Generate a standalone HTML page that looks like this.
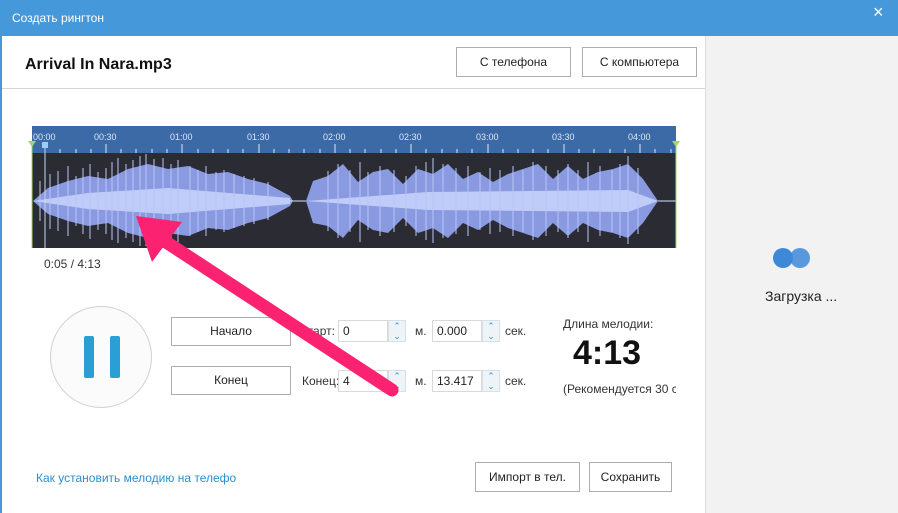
<!DOCTYPE html>
<html><head><meta charset="utf-8"><style>
*{margin:0;padding:0;box-sizing:border-box}
body{width:898px;height:513px;overflow:hidden;background:#fff;font-family:"Liberation Sans","DejaVu Sans",sans-serif;position:relative;color:#222}
.a{position:absolute}
.btn{position:absolute;border:1px solid #adadad;background:#fff;font-size:12px;text-align:center;color:#222}
.inp{position:absolute;border:1px solid #d9d9d9;height:22px;font-size:12px;padding:3px 4px;background:#fff}
.sp{position:absolute;width:18px;height:22px;background:#eef3f8;border:1px solid #d6e0ea;font-size:9px;color:#3a8fd0;text-align:center;line-height:10px}
.lbl{position:absolute;font-size:12px;color:#333}
</style></head><body>
<div class="a" style="left:0;top:0;width:898px;height:36px;background:#4598da"></div>
<div class="a" style="left:12px;top:11px;color:#fff;font-size:12px">Создать рингтон</div>
<div class="a" style="left:873px;top:2px;color:#fff;font-size:18px">×</div>
<div class="a" style="left:0;top:36px;width:2px;height:477px;background:#4598da"></div>
<div class="a" style="left:705px;top:36px;width:193px;height:477px;background:#f2f2f2;border-left:1px solid #ddd"></div>
<div class="a" style="left:25px;top:56px;font-size:16px;font-weight:bold;color:#111">Arrival In Nara.mp3</div>
<div class="btn" style="left:456px;top:47px;width:115px;height:30px;line-height:28px">С телефона</div>
<div class="btn" style="left:582px;top:47px;width:115px;height:30px;line-height:28px">С компьютера</div>
<div class="a" style="left:2px;top:88px;width:703px;height:1px;background:#d6d6d6"></div>
<svg class="a" style="left:28px;top:126px" width="652" height="122">
<rect x="4" y="0" width="644" height="27" fill="#3b6aa6"/>
<rect x="4" y="27" width="644" height="95" fill="#2b2c33"/>
<g fill="#dde6f4" font-size="9" font-family="Liberation Sans">
<text x="5" y="14">00:00</text><text x="66" y="14">00:30</text><text x="142" y="14">01:00</text><text x="219" y="14">01:30</text><text x="295" y="14">02:00</text><text x="371" y="14">02:30</text><text x="448" y="14">03:00</text><text x="524" y="14">03:30</text><text x="600" y="14">04:00</text>
</g>
<path stroke="#dde6f4" stroke-width="1" d="M17 21v6M32 23v4M48 23v4M63 23v4M78 18v9M93 23v4M108 23v4M124 23v4M139 23v4M154 18v9M170 23v4M185 23v4M200 23v4M215 23v4M231 18v9M246 23v4M261 23v4M276 23v4M292 23v4M307 18v9M322 23v4M337 23v4M353 23v4M368 23v4M383 18v9M398 23v4M414 23v4M429 23v4M444 23v4M460 18v9M475 23v4M490 23v4M505 23v4M520 23v4M536 18v9M551 23v4M566 23v4M582 23v4M597 23v4M612 18v9M627 23v4M643 23v4"/>
<polygon fill="#8a9ae0" points="5,75 20,62 40,55 60,50 80,53 100,43 120,38 140,43 160,40 180,48 200,46 220,53 240,58 262,70 265,75 262,80 240,92 220,97 200,104 180,102 160,110 140,107 120,112 100,107 80,97 60,100 40,95 20,88"/>
<polygon fill="#8a9ae0" points="278,75 285,55 300,50 315,38 330,56 345,46 360,43 375,58 390,43 405,48 420,38 435,53 450,46 465,56 480,48 495,43 510,38 525,53 540,40 555,53 570,46 585,43 600,38 615,53 630,75 615,97 600,112 585,107 570,104 555,97 540,110 525,97 510,112 495,107 480,102 465,94 450,104 435,97 420,112 405,102 390,107 375,92 360,107 345,104 330,94 315,112 300,100 285,97"/>
<polygon fill="#c0ccf8" points="5,75 60,67 140,62 262,72 262,78 140,88 60,83"/>
<polygon fill="#c0ccf8" points="278,75 400,66 600,64 630,75 600,86 400,84"/>
<path stroke="#d8e0ff" stroke-width="1" d="M262 75h16M630 75h18"/>
<path stroke="#b8c4fa" stroke-width="1" d="M12 55v40M22 48v55M30 45v60M40 40v70M48 50v50M55 42v66M62 38v75M70 46v58M78 42v66M84 36v78M90 32v85M98 38v74M105 34v82M112 30v90M118 28v92M126 33v84M135 32v86M143 38v74M150 34v82M162 40v70M170 44v62M178 40v70M188 46v58M196 44v62M206 48v54M216 50v50M226 52v46M240 56v38M300 45v60M310 38v74M322 44v62M332 36v80M340 46v58M352 40v70M366 44v62M378 50v50M388 40v70M398 36v78M405 32v85M415 38v74M428 42v66M440 40v70M452 46v58M462 42v66M472 44v62M485 40v70M495 44v62M505 36v78M518 40v70M530 44v62M540 38v74M550 44v62M560 36v80M572 40v70M584 44v62M592 38v74M600 30v88M610 42v66"/>
<line x1="17" y1="20" x2="17" y2="122" stroke="#c8d6f0" stroke-width="1"/>
<rect x="14" y="16" width="6" height="6" fill="#9ad0f5"/>
<line x1="4" y1="18" x2="4" y2="122" stroke="#9ed86a"/>
<line x1="648" y1="18" x2="648" y2="122" stroke="#9ed86a"/>
<polygon points="0,15 8,15 4,21" fill="#9ed86a"/><polygon points="644,15 652,15 648,21" fill="#9ed86a"/>
</svg>
<div class="lbl" style="left:44px;top:257px">0:05 / 4:13</div>
<div class="a" style="left:50px;top:306px;width:102px;height:102px;border-radius:50%;border:1px solid #d0d0d0;background:#fbfbfb"></div>
<div class="a" style="left:84px;top:336px;width:10px;height:42px;background:#2a9fd6;border-radius:2px"></div>
<div class="a" style="left:110px;top:336px;width:10px;height:42px;background:#2a9fd6;border-radius:2px"></div>
<div class="btn" style="left:171px;top:317px;width:120px;height:29px;line-height:27px">Начало</div>
<div class="btn" style="left:171px;top:366px;width:120px;height:29px;line-height:27px">Конец</div>
<div class="lbl" style="left:299px;top:324px">Старт:</div>
<div class="lbl" style="left:302px;top:374px">Конец:</div>
<div class="inp" style="left:338px;top:320px;width:50px">0</div><div class="sp" style="left:388px;top:320px">⌃<br>⌄</div>
<div class="inp" style="left:338px;top:370px;width:50px">4</div><div class="sp" style="left:388px;top:370px">⌃<br>⌄</div>
<div class="lbl" style="left:415px;top:324px">м.</div><div class="lbl" style="left:415px;top:374px">м.</div>
<div class="inp" style="left:432px;top:320px;width:50px">0.000</div><div class="sp" style="left:482px;top:320px">⌃<br>⌄</div>
<div class="inp" style="left:432px;top:370px;width:50px">13.417</div><div class="sp" style="left:482px;top:370px">⌃<br>⌄</div>
<div class="lbl" style="left:505px;top:324px">сек.</div><div class="lbl" style="left:505px;top:374px">сек.</div>
<div class="lbl" style="left:563px;top:317px">Длина мелодии:</div>
<div class="a" style="left:573px;top:334px;font-size:34px;font-weight:bold;color:#111">4:13</div>
<div class="lbl" style="left:563px;top:382px;width:113px;overflow:hidden;white-space:nowrap">(Рекомендуется 30 с</div>
<div class="a" style="left:36px;top:471px;font-size:12px;color:#2a8fd0;width:200px;overflow:hidden;white-space:nowrap">Как установить мелодию на телефон</div>
<div class="btn" style="left:475px;top:462px;width:105px;height:30px;line-height:28px">Импорт в тел.</div>
<div class="btn" style="left:589px;top:462px;width:83px;height:30px;line-height:28px">Сохранить</div>
<div class="a" style="left:773px;top:248px;width:20px;height:20px;border-radius:50%;background:#3e88d8"></div>
<div class="a" style="left:790px;top:248px;width:20px;height:20px;border-radius:50%;background:#3e88d8;opacity:.85"></div>
<div class="a" style="left:765px;top:288px;font-size:14px;color:#222">Загрузка ...</div>
<svg class="a" style="left:0;top:0" width="898" height="513">
<line x1="392" y1="390" x2="160" y2="238" stroke="#fc2272" stroke-width="13" stroke-linecap="round"/>
<polygon points="136,216 182,222 152,262" fill="#fc2272"/>
</svg>
</body></html>
